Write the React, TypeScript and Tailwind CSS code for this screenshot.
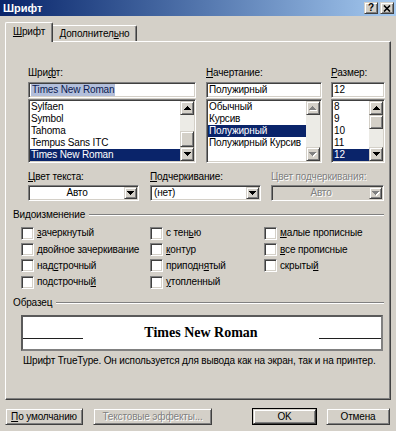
import React from "react";

const field =
  "border border-t-[#808080] border-l-[#808080] border-b-white border-r-white shadow-[inset_1px_1px_0_#404040,inset_-1px_-1px_0_#d4d0c8]";
const raised =
  "border border-t-[#d4d0c8] border-l-[#d4d0c8] border-b-[#404040] border-r-[#404040] shadow-[inset_1px_1px_0_#ffffff,inset_-1px_-1px_0_#808080]";

function Tri({ dir, color = "#000" }: { dir: "up" | "down"; color?: string }) {
  const rows = [7, 5, 3, 1];
  return (
    <svg width="7" height="4" viewBox="0 0 7 4" shapeRendering="crispEdges">
      {rows.map((w, i) => (
        <rect key={i} x={(7 - w) / 2} y={dir === "down" ? i : 3 - i} width={w} height={1} fill={color} />
      ))}
    </svg>
  );
}

function DisTri({ dir }: { dir: "up" | "down" }) {
  const rows = [7, 5, 3, 1];
  return (
    <svg width="8" height="5" viewBox="0 0 8 5" shapeRendering="crispEdges">
      {rows.map((w, i) => (
        <rect key={"w" + i} x={(7 - w) / 2 + 1} y={(dir === "down" ? i : 3 - i) + 1} width={w} height={1} fill="#ffffff" />
      ))}
      {rows.map((w, i) => (
        <rect key={"g" + i} x={(7 - w) / 2} y={dir === "down" ? i : 3 - i} width={w} height={1} fill="#808080" />
      ))}
    </svg>
  );
}

function ArrowBtn({ dir, disabled }: { dir: "up" | "down"; disabled?: boolean }) {
  return (
    <div className={`${raised} w-[14px] h-[14px] bg-[#d4d0c8] flex items-center justify-center shrink-0`}>
      {disabled ? <DisTri dir={dir} /> : <Tri dir={dir} />}
    </div>
  );
}

function Thumb({ h }: { h: string }) {
  return <div className={`${raised} w-[14px] ${h} bg-[#d4d0c8] shrink-0`} />;
}

function U({ children }: { children: React.ReactNode }) {
  return <span className="underline underline-offset-[1px]">{children}</span>;
}

function Item({ children, sel }: { children: React.ReactNode; sel?: boolean }) {
  return (
    <div className={`h-[12px] leading-[12px] pl-[1px] whitespace-nowrap ${sel ? "bg-[#0a246a] text-white" : ""}`}>
      {children}
    </div>
  );
}

function Check({ children }: { children: React.ReactNode }) {
  return (
    <div className="h-[16.4px] flex items-center">
      <div className={`${field} w-[13px] h-[13px] bg-white shrink-0`} />
      <span className="ml-[3px] whitespace-nowrap">{children}</span>
    </div>
  );
}

function Combo({ text, center, disabled, w }: { text: string; center?: boolean; disabled?: boolean; w: string }) {
  return (
    <div className={`${field} ${w} h-[16px] p-[1px] flex ${disabled ? "bg-[#d4d0c8]" : "bg-white"}`}>
      <div
        className={`flex-1 leading-[12px] flex items-center ${center ? "justify-center" : "pl-[2px]"} ${
          disabled ? "text-[#808080] [text-shadow:1px_1px_0_#ffffff]" : ""
        }`}
      >
        {text}
      </div>
      <div className={`${raised} w-[13px] h-full bg-[#d4d0c8] flex items-center justify-center`}>
        {disabled ? <DisTri dir="down" /> : <Tri dir="down" />}
      </div>
    </div>
  );
}

function Btn({ w, children, disabled, def }: { w: string; children: React.ReactNode; disabled?: boolean; def?: boolean }) {
  const inner = (
    <div
      className={`${raised} w-full h-full bg-[#d4d0c8] flex items-center justify-center whitespace-nowrap ${
        disabled ? "text-[#808080] [text-shadow:1px_1px_0_#ffffff]" : ""
      }`}
    >
      {children}
    </div>
  );
  if (def) {
    return <div className={`${w} h-[17px] border border-black`}>{inner}</div>;
  }
  return <div className={`${w} h-[17px]`}>{inner}</div>;
}

function GroupHead({ label }: { label: string }) {
  return (
    <div className="ml-[7px] w-[371px] h-[12px] flex items-center">
      <span className="whitespace-nowrap">{label}</span>
      <div className="ml-[4px] flex-1 h-[2px] border-t border-t-[#808080] border-b border-b-white" />
    </div>
  );
}

export default function App() {
  return (
    <div className="w-[396px] h-[431px] bg-[#d4d0c8] overflow-hidden text-[10px] leading-[12px] tracking-[-0.15px] text-black font-['Liberation_Sans',Arial,sans-serif]">
      {/* Title bar */}
      <div className="h-[16px] bg-linear-to-r from-[#0a246a] to-[#a6caf0] flex items-center pl-[3px] pr-[2px]">
        <span className="text-white font-bold text-[11px] leading-[16px] tracking-normal">Шрифт</span>
        <div className="ml-auto flex gap-[2px]">
          <div className={`${raised} w-[14px] h-[12px] bg-[#d4d0c8] flex items-center justify-center text-[10px] font-bold leading-none`}>
            ?
          </div>
          <div className={`${raised} w-[14px] h-[12px] bg-[#d4d0c8] flex items-center justify-center`}>
            <svg width="8" height="7" viewBox="0 0 8 7">
              <path d="M1 0.5 L7 6.5 M7 0.5 L1 6.5" stroke="#000" strokeWidth="1.6" />
            </svg>
          </div>
        </div>
      </div>

      {/* Tabs */}
      <div className="mt-[6px] ml-[5px] h-[19px] flex items-end">
        <div className="relative z-10 -mb-[1px] h-[20px] w-[48px] bg-[#d4d0c8] border-l border-t border-white border-r border-r-[#404040] rounded-t-[2px] shadow-[inset_-1px_0_0_#808080] flex items-center justify-center pb-[1px]">
          <span>
            <U>Ш</U>рифт
          </span>
        </div>
        <div className="h-[16px] w-[84px] bg-[#d4d0c8] border-t border-t-white border-r border-r-[#404040] rounded-tr-[2px] shadow-[inset_-1px_0_0_#808080] flex items-center justify-center">
          <span>
            Дополнител<U>ь</U>но
          </span>
        </div>
      </div>

      {/* Panel */}
      <div className="ml-[5px] w-[386px] h-[359px] border border-t-white border-l-white border-r-[#404040] border-b-[#404040] shadow-[inset_-1px_-1px_0_#808080] flex flex-col">
        {/* Row 1: lists */}
        <div className="mt-[24px] ml-[22px] flex">
          {/* Font */}
          <div className="w-[168px] flex flex-col">
            <div className="h-[13px] mb-[3px] leading-[13px]">
              Шри<U>ф</U>т:
            </div>
            <div className={`${field} h-[16px] bg-white p-[1px] flex items-center mb-[1px]`}>
              <span className="ml-[1px] bg-[#b3bfdb] text-[#0a1a50] leading-[12px] px-[1px]">Times New Roman</span>
            </div>
            <div className={`${field} h-[64px] bg-white p-[1px] flex`}>
              <div className="flex-1 overflow-hidden">
                <Item>Sylfaen</Item>
                <Item>Symbol</Item>
                <Item>Tahoma</Item>
                <Item>Tempus Sans ITC</Item>
                <Item sel>Times New Roman</Item>
              </div>
              <div className="w-[14px] flex flex-col">
                <ArrowBtn dir="up" />
                <div className="flex-1 bg-[#ecebe6]" />
                <Thumb h="h-[16px]" />
                <ArrowBtn dir="down" />
              </div>
            </div>
          </div>
          {/* Style */}
          <div className="ml-[10px] w-[116px] flex flex-col">
            <div className="h-[13px] mb-[3px] leading-[13px]">
              <U>Н</U>ачертание:
            </div>
            <div className={`${field} h-[16px] bg-white p-[1px] flex items-center mb-[1px]`}>
              <span className="ml-[1px] leading-[12px]">Полужирный</span>
            </div>
            <div className={`${field} h-[64px] bg-white p-[1px] flex`}>
              <div className="flex-1 overflow-hidden">
                <Item>Обычный</Item>
                <Item>Курсив</Item>
                <Item sel>Полужирный</Item>
                <Item>Полужирный Курсив</Item>
              </div>
              <div className="w-[14px] flex flex-col">
                <ArrowBtn dir="up" disabled />
                <div className="flex-1 bg-[#ecebe6]" />
                <ArrowBtn dir="down" disabled />
              </div>
            </div>
          </div>
          {/* Size */}
          <div className="ml-[9px] w-[54px] flex flex-col">
            <div className="h-[13px] mb-[3px] leading-[13px]">
              <U>Р</U>азмер:
            </div>
            <div className={`${field} h-[16px] bg-white p-[1px] flex items-center mb-[1px]`}>
              <span className="ml-[1px] leading-[12px]">12</span>
            </div>
            <div className={`${field} h-[64px] bg-white p-[1px] flex`}>
              <div className="flex-1 overflow-hidden">
                <Item>8</Item>
                <Item>9</Item>
                <Item>10</Item>
                <Item>11</Item>
                <Item sel>12</Item>
              </div>
              <div className="w-[14px] flex flex-col">
                <ArrowBtn dir="up" />
                <Thumb h="h-[14px]" />
                <div className="flex-1 bg-[#ecebe6]" />
                <ArrowBtn dir="down" />
              </div>
            </div>
          </div>
        </div>

        {/* Row 2: combos */}
        <div className="mt-[7px] ml-[22px] flex">
          <div className="w-[111px] flex flex-col">
            <div className="h-[13px] mb-[2px] leading-[13px]">
              <U>Ц</U>вет текста:
            </div>
            <Combo text="Авто" center w="w-[111px]" />
          </div>
          <div className="ml-[11px] w-[111px] flex flex-col">
            <div className="h-[13px] mb-[2px] leading-[13px] whitespace-nowrap">
              <U>П</U>одчеркивание:
            </div>
            <Combo text="(нет)" w="w-[111px]" />
          </div>
          <div className="ml-[10px] w-[113px] flex flex-col">
            <div className="h-[13px] mb-[2px] leading-[13px] whitespace-nowrap text-[#808080] [text-shadow:1px_1px_0_#ffffff]">
              Цвет подчеркивания:
            </div>
            <Combo text="Авто" center disabled w="w-[113px]" />
          </div>
        </div>

        {/* Видоизменение */}
        <div className="mt-[8px]">
          <GroupHead label="Видоизменение" />
        </div>
        <div className="mt-[4px] ml-[15px] flex">
          <div className="w-[129px] flex flex-col">
            <Check>
              <U>з</U>ачеркнутый
            </Check>
            <Check>
              <U>д</U>войное зачеркивание
            </Check>
            <Check>
              над<U>с</U>трочный
            </Check>
            <Check>
              подстрочны<U>й</U>
            </Check>
          </div>
          <div className="w-[114px] flex flex-col">
            <Check>
              с тен<U>ь</U>ю
            </Check>
            <Check>
              <U>к</U>онтур
            </Check>
            <Check>
              приподн<U>я</U>тый
            </Check>
            <Check>
              <U>у</U>топленный
            </Check>
          </div>
          <div className="flex flex-col">
            <Check>
              <U>м</U>алые прописные
            </Check>
            <Check>
              <U>в</U>се прописные
            </Check>
            <Check>
              скрыты<U>й</U>
            </Check>
          </div>
        </div>

        {/* Образец */}
        <div className="mt-[6px]">
          <GroupHead label="Образец" />
        </div>
        <div className="mt-[6px] ml-[15px] w-[362px] h-[36px] bg-white border-2 border-t-[#5a5a5a] border-l-[#5a5a5a] border-r-[#808080] border-b-[#808080] flex items-center">
          <div className="w-[60px] h-px bg-[#202020] mt-[12px]" />
          <div className="flex-1 text-center font-['Liberation_Serif','Times_New_Roman',serif] font-bold text-[14px] leading-[18px] tracking-normal">
            Times New Roman
          </div>
          <div className="w-[62px] h-px bg-[#202020] mt-[12px]" />
        </div>
        <div className="mt-[4px] ml-[17px] h-[12px] leading-[12px] whitespace-nowrap">
          Шрифт TrueType. Он используется для вывода как на экран, так и на принтер.
        </div>
      </div>

      {/* Buttons */}
      <div className="mt-[8px] ml-[5px] flex">
        <Btn w="w-[78px]">
          <span>
            <U>П</U>о умолчанию
          </span>
        </Btn>
        <div className="ml-[10px]">
          <Btn w="w-[119px]" disabled>
            Текстовые эффекты...
          </Btn>
        </div>
        <div className="ml-[40px]">
          <Btn w="w-[65px]" def>
            OK
          </Btn>
        </div>
        <div className="ml-[9px]">
          <Btn w="w-[64px]">Отмена</Btn>
        </div>
      </div>
    </div>
  );
}
